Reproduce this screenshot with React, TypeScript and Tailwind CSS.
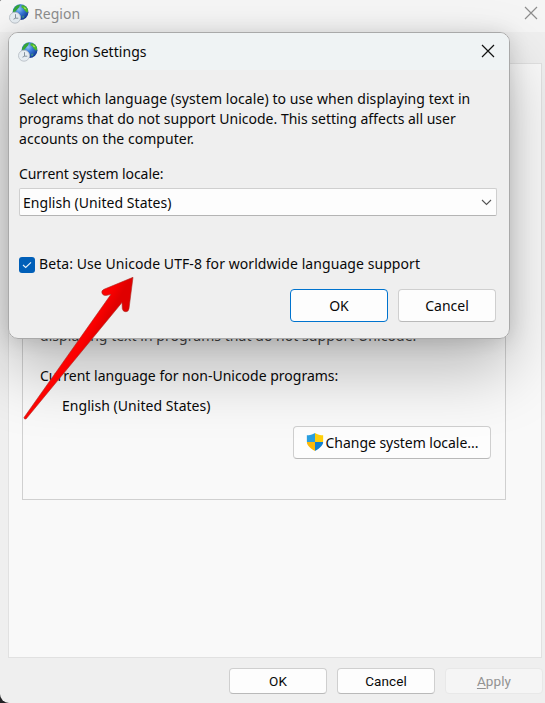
function RegionIcon() {
  return (
    <svg width="20" height="20" viewBox="0 0 20 20" className="shrink-0">
      <defs>
        <radialGradient id="ocean" cx="0.4" cy="0.3" r="0.75">
          <stop offset="0" stopColor="#8fc4f5" />
          <stop offset="0.4" stopColor="#3a7bd8" />
          <stop offset="1" stopColor="#0b2f8c" />
        </radialGradient>
      </defs>
      <circle cx="11.5" cy="8.2" r="7.9" fill="url(#ocean)" />
      <path d="M4 6.5C5.5 2.5 8 .8 11.5.5 10 2 11 3 9 4.5 7.5 5.8 6.5 8.500 4.500 9.500Z" fill="#35a637" />
      <path d="M12.500 1.200C16 .8 18.500 3.500 19.200 6.500L18.500 8.500C17.500 9 17 7.500 15.800 6.500 14.500 6 15.500 4.500 12.500 3.500Z" fill="#49b82f" />
      <path d="M14.500 3C16 3 17 4 17.300 5.200L15.500 5Z" fill="#a8e05a" />
      <path d="M13 12L15.500 11.500 15 13.800 13.500 14.500Z" fill="#3a8a8a" />
      <circle cx="6" cy="13.700" r="5.500" fill="#e6edf2" stroke="#b9c0c6" strokeWidth=".9" />
      <path d="M6.500 10.200v4h2.800M6.500 14.200l-2 1" fill="none" stroke="#7a8995" strokeWidth=".9" />
    </svg>
  );
}

function CloseIcon({ className }: { className: string }) {
  return (
    <svg width="14" height="14" viewBox="0 0 14 14" className={className}>
      <path d="M1 1L13 13M13 1L1 13" stroke="currentColor" strokeWidth="1.2" />
    </svg>
  );
}

function Shield() {
  return (
    <svg width="18" height="18" viewBox="0 0 18 19" className="mb-[2px] shrink-0">
      <defs>
        <clipPath id="shield">
          <path d="M9 0C6.500 1.700 3.500 2.400 0 2.400V8C0 13 4 16.500 9 19 14 16.500 18 13 18 8V2.400C14.500 2.400 11.500 1.700 9 0Z" />
        </clipPath>
      </defs>
      <g clipPath="url(#shield)">
        <path d="M0 0H9V9.500H0Z" fill="#2a9fdf" />
        <path d="M9 0H18V9.500H9Z" fill="#ffcf0a" />
        <path d="M0 9.500H9V19H0Z" fill="#fbb90b" />
        <path d="M9 9.500H18V19H9Z" fill="#1180d2" />
      </g>
    </svg>
  );
}

function Arrow() {
  return (
    <svg width="120" height="150" viewBox="0 0 120 150" className="absolute left-[20px] top-[273px]">
      <defs>
        <linearGradient id="red" x1="0.35" y1="0.35" x2="0.6" y2="0.53">
          <stop offset="0" stopColor="#ff0a05" />
          <stop offset="0.7" stopColor="#fb0000" />
          <stop offset="1" stopColor="#e00000" />
        </linearGradient>
      </defs>
      <path
        d="M113 4.300L84 16.300Q81 17.500 82 20.500Q83.500 23.300 87 22.300L91 21.300L4 144.500Q4 146.500 6 146L102 29.500L102.300 35.500Q103 39 106 38.800Q108.700 38.500 109 35.500Z"
        fill="url(#red)"
        stroke="#a92b24"
        strokeWidth=".6"
      />
    </svg>
  );
}

const button = "flex shrink-0 items-center justify-center rounded-[4px] border bg-[#fdfdfd] whitespace-nowrap";

function RegionSettings() {
  return (
    <section className="absolute left-[8px] top-[32px] flex h-[307px] w-[502px] flex-col overflow-hidden rounded-[10px] border border-[#a9a9a9] bg-[#efefef]">
      <header className="flex h-[37px] shrink-0 items-center bg-[#eff3f4] pl-[9px] pr-[14px]">
        <RegionIcon />
        <h1 className="ml-[5px] flex-1 text-[14px] tracking-[0.05px]">Region Settings</h1>
        <CloseIcon className="mb-[2px] text-[#111]" />
      </header>
      <div className="flex flex-col pl-[10px] pr-[13px] pt-[19px]">
        <p className="whitespace-nowrap text-[14px] leading-[20px]">
          <span className="block tracking-[0.075px]">Select which language (system locale) to use when displaying text in</span>
          <span className="block tracking-[0px]">programs that do not support Unicode. This setting affects all user</span>
          <span className="block tracking-[0.03px]">accounts on the computer.</span>
        </p>
        <label className="mt-[15px] text-[14px] leading-[20px] tracking-[-0.08px]">Current system locale:</label>
        <div className="mt-[4px] flex h-[28px] w-[478px] items-center justify-between rounded-[2px] border border-[#cfcfcf] border-b-[#b4b4b4] bg-[#fdfdfd] pl-[3px] pr-[4px] text-[14px] tracking-[0.04px]">
          <span>English (United States)</span>
          <svg width="11" height="7" viewBox="0 0 11 7">
            <path d="M1 1L5.500 5.500 10 1" fill="none" stroke="#555" strokeWidth="1.1" />
          </svg>
        </div>
        <div className="mt-[37px] flex h-[20px] items-center">
          <span className="mt-[3px] flex size-[16px] items-center justify-center rounded-[3px] bg-[#005fb8]">
            <svg width="10" height="8" viewBox="0 0 10 8">
              <path d="M1 4L3.700 6.500 9 1.300" fill="none" stroke="#e9f3fa" strokeWidth="1.1" />
            </svg>
          </span>
          <span className="ml-[4px] whitespace-nowrap text-[14px] tracking-[0.07px]">Beta: Use Unicode UTF-8 for worldwide language support</span>
        </div>
        <div className="mt-[16px] flex justify-end gap-[10px] text-[14px]">
          <button className={button + " h-[33px] w-[98px] border-[#0073ce]"}>OK</button>
          <button className={button + " h-[33px] w-[98px] border-[#cfcfcf] border-b-[#b9b9b9]"}>Cancel</button>
        </div>
      </div>
    </section>
  );
}

export default function App() {
  return (
    <div className="h-[703px] w-[545px] overflow-hidden bg-[#242426] font-['Noto_Sans','Open_Sans',sans-serif] text-[#090909]">
      <main className="relative flex h-full flex-col overflow-hidden rounded-bl-[9px] rounded-tl-[2px] bg-[#efefef]">
        <header className="flex h-[32px] shrink-0 items-center bg-[#f5f5f5] pb-[5px] pl-[9px] text-[#8d8d8d]">
          <RegionIcon />
          <span className="ml-[5px] flex-1 text-[14px] tracking-[0.05px]">Region</span>
          <CloseIcon className="mb-[2px] mr-[7px]" />
        </header>
        <div className="ml-[8px] mt-[31px] flex h-[595px] w-[534px] shrink-0 flex-col border border-[#e1e1e1] bg-[#f9f9f9] pl-[13px]">
          <div className="flex h-[436px] w-[484px] flex-col border border-[#d0d0d0] pt-[261px]">
            <p className="ml-[17px] whitespace-nowrap text-[14px] leading-[20px] tracking-[0.05px] text-[#444]">displaying text in programs that do not support Unicode.</p>
            <p className="ml-[17px] mt-[20px] whitespace-nowrap text-[14px] leading-[20px] tracking-[0px]">Current language for non-Unicode programs:</p>
            <p className="ml-[39px] mt-[10px] whitespace-nowrap text-[14px] leading-[20px] tracking-[0.04px]">English (United States)</p>
            <div className="mt-[10px] flex justify-end pr-[14px]">
              <button className={button + " h-[33px] w-[198px] gap-[2px] border-[#cfcfcf] border-b-[#b9b9b9] text-[14px] tracking-[-0.04px]"}>
                <Shield />
                <span>Change system locale...</span>
              </button>
            </div>
          </div>
        </div>
        <footer className="mt-[10px] flex shrink-0 justify-end gap-[10px] pr-[2px] font-['Roboto',sans-serif] text-[13.5px] tracking-[0.1px]">
          <button className={button + " h-[26px] w-[98px] border-[#cfcfcf] border-b-[#b9b9b9]"}>OK</button>
          <button className={button + " h-[26px] w-[98px] border-[#cfcfcf] border-b-[#b9b9b9]"}>Cancel</button>
          <button className="flex h-[26px] w-[98px] shrink-0 items-center justify-center rounded-[4px] border border-[#e8e8e8] bg-[#f5f5f5] text-[#929292]">
            <span><u className="underline-offset-2">A</u>pply</span>
          </button>
        </footer>
        <div className="pointer-events-none absolute left-[8px] top-[32px] h-[307px] w-[502px] rounded-[10px] shadow-[0_32px_64px_rgba(0,0,0,0.25),0_2px_21px_rgba(0,0,0,0.14)]" />
        <RegionSettings />
        <Arrow />
      </main>
    </div>
  );
}
